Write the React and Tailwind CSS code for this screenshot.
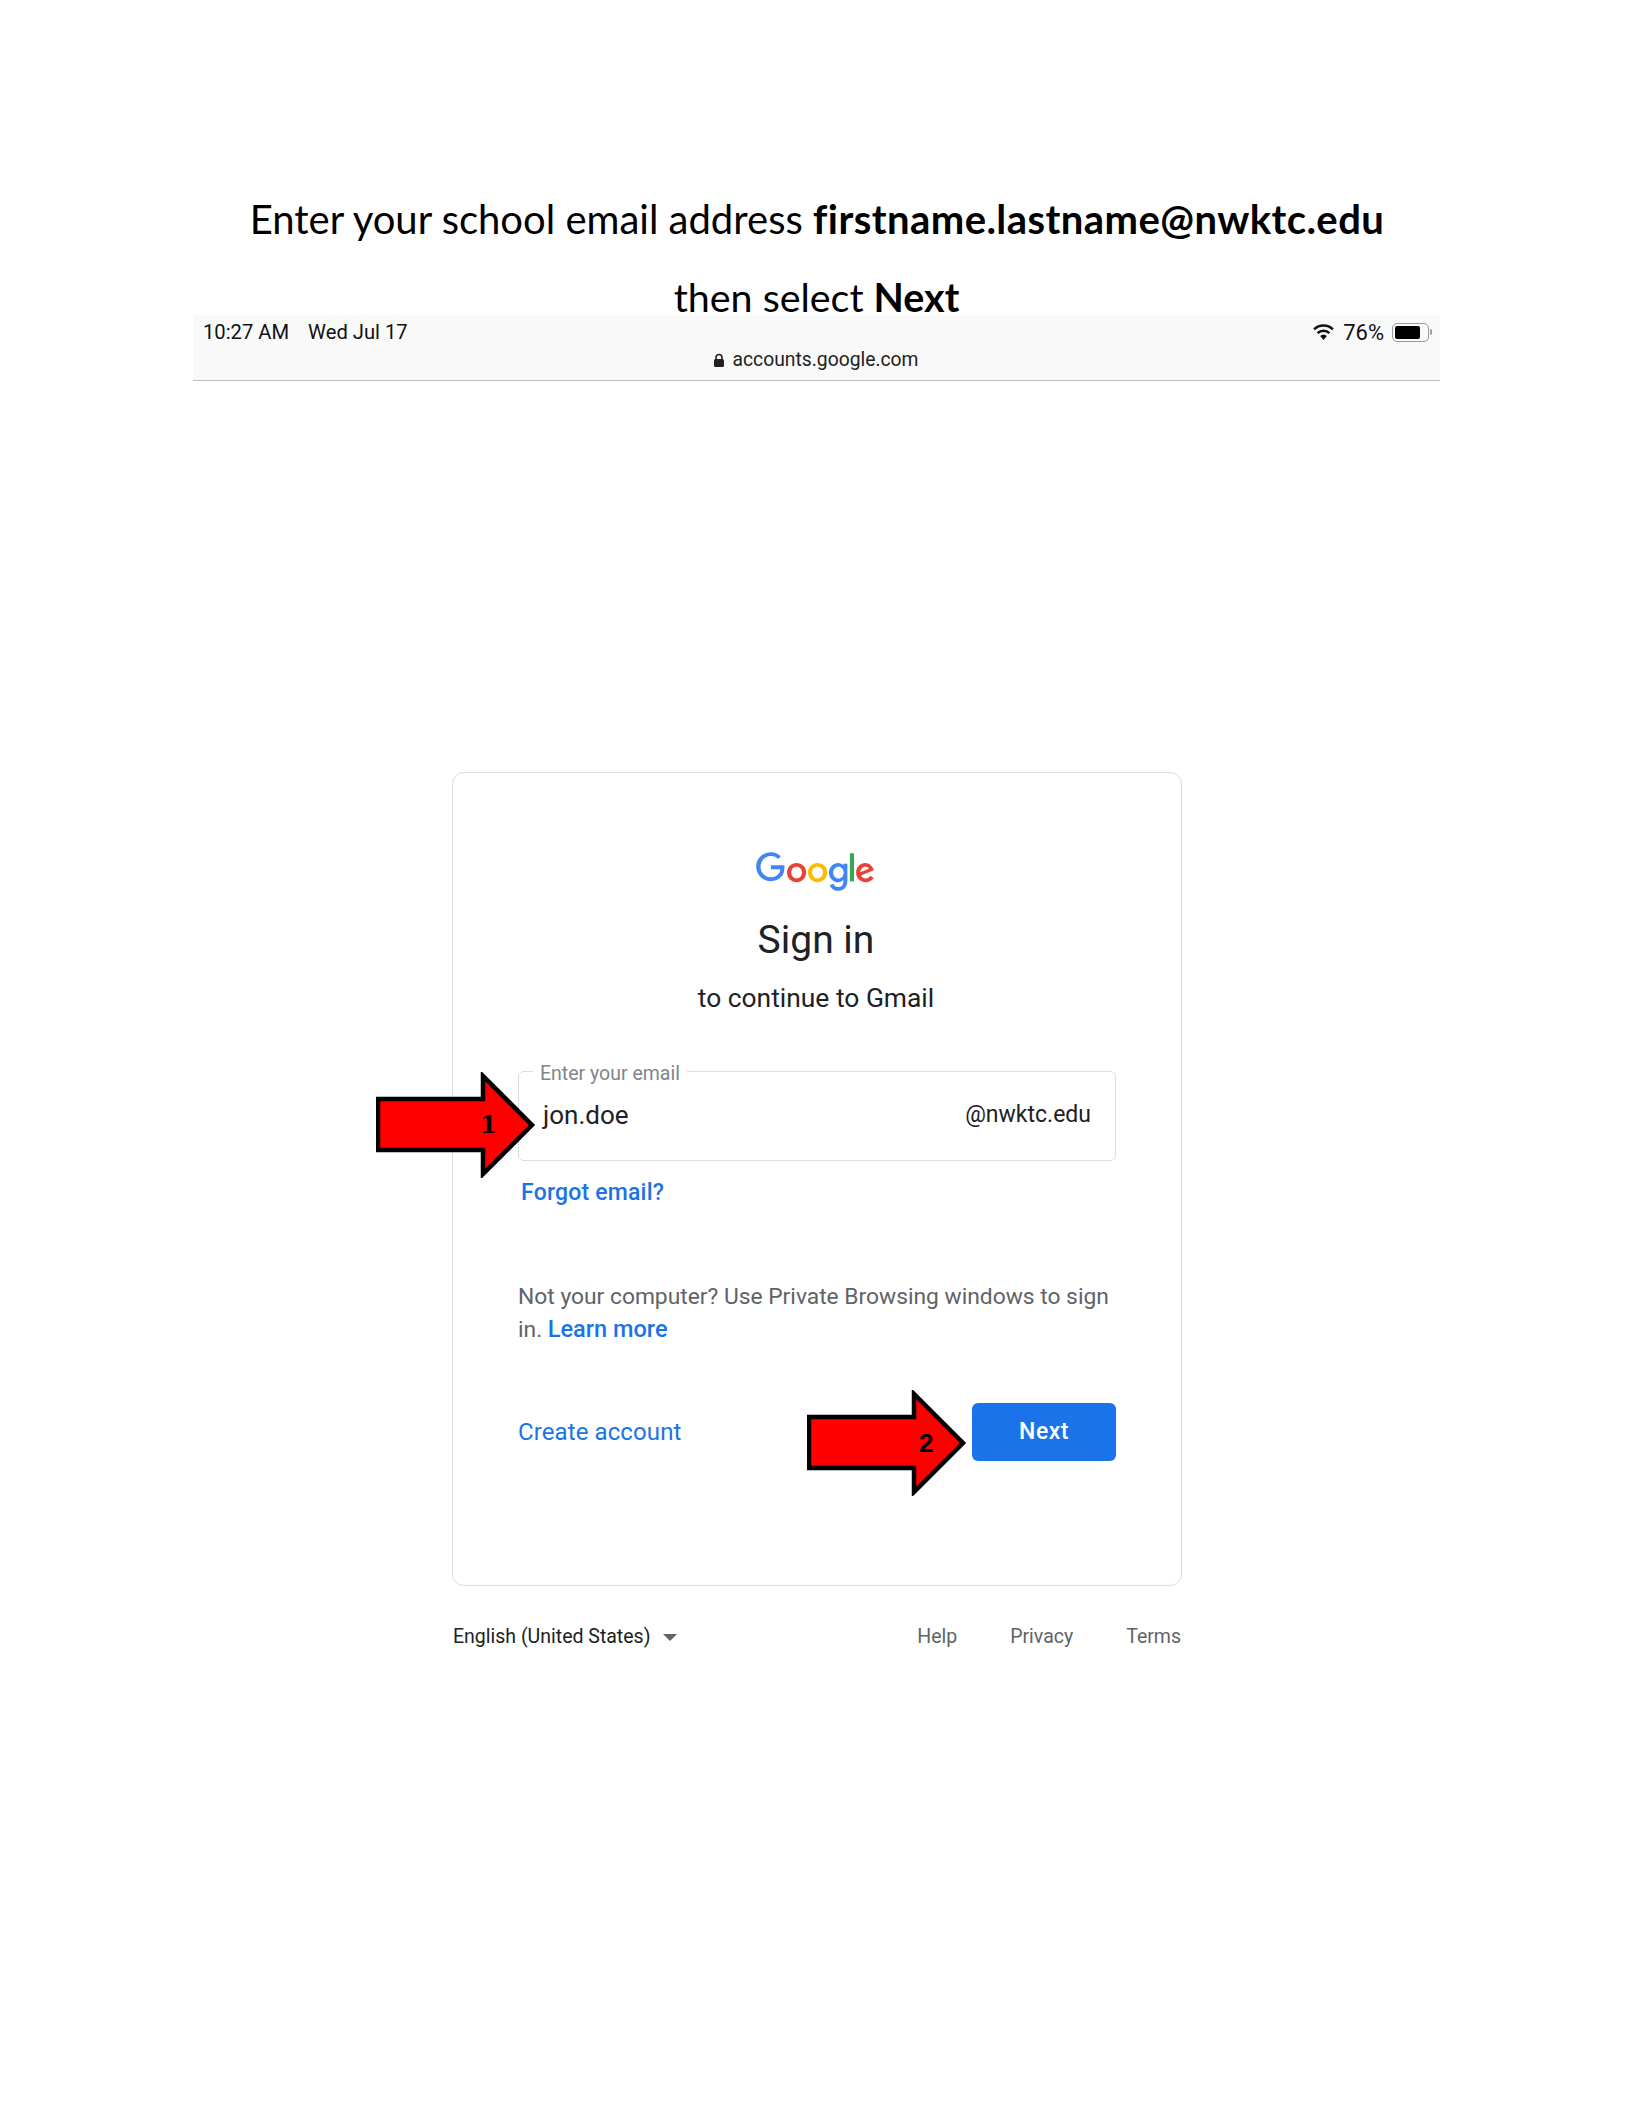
const roboto = { fontFamily: "Roboto, sans-serif" };

function GoogleLogo() {
  return (
    <svg viewBox="0 0 75 24" className="w-[121px] h-[39px] block">
      <path fill="#ea4335" d="M67.954 16.303c-1.33 0-2.278-.608-2.886-1.804l7.967-3.3-.27-.68c-.495-1.33-2.008-3.79-5.102-3.79-3.068 0-5.622 2.41-5.622 5.96 0 3.34 2.53 5.96 5.92 5.96 2.73 0 4.31-1.67 4.97-2.64l-2.03-1.35c-.673.98-1.6 1.64-2.93 1.64zm-.203-7.27c1.04 0 1.92.52 2.21 1.264l-5.32 2.21c-.06-2.3 1.79-3.474 3.12-3.474z" />
      <path fill="#34a853" d="M58.193.67h2.564v17.44h-2.564z" />
      <path fill="#4285f4" d="M54.152 8.066h-.088c-.588-.697-1.716-1.33-3.136-1.33-2.98 0-5.71 2.614-5.71 5.98 0 3.338 2.73 5.933 5.71 5.933 1.42 0 2.548-.64 3.136-1.36h.088v.86c0 2.28-1.217 3.5-3.183 3.5-1.61 0-2.6-1.15-3-2.12l-2.28.94c.65 1.58 2.39 3.52 5.28 3.52 3.06 0 5.66-1.807 5.66-6.206V7.21h-2.48v.858zm-3.006 8.237c-1.804 0-3.318-1.513-3.318-3.588 0-2.1 1.514-3.635 3.318-3.635 1.784 0 3.183 1.534 3.183 3.635 0 2.075-1.4 3.588-3.19 3.588z" />
      <path fill="#fbbc05" d="M38.17 6.735c-3.28 0-5.953 2.506-5.953 5.96 0 3.432 2.673 5.96 5.954 5.96 3.29 0 5.96-2.528 5.96-5.96 0-3.46-2.67-5.96-5.95-5.96zm0 9.568c-1.798 0-3.348-1.48-3.348-3.61 0-2.14 1.55-3.61 3.35-3.61s3.348 1.47 3.348 3.6c0 2.13-1.55 3.61-3.35 3.61z" />
      <path fill="#ea4335" d="M25.17 6.71c-3.28 0-5.954 2.505-5.954 5.958 0 3.433 2.673 5.96 5.954 5.96 3.282 0 5.955-2.527 5.955-5.96 0-3.453-2.673-5.96-5.955-5.96zm0 9.567c-1.8 0-3.35-1.487-3.35-3.61 0-2.14 1.55-3.608 3.35-3.608s3.35 1.46 3.35 3.6c0 2.12-1.55 3.61-3.35 3.61z" />
      <path fill="#4285f4" d="M9.24 8.19v2.46h5.88c-.18 1.38-.64 2.39-1.34 3.1-.86.86-2.2 1.8-4.54 1.8-3.62 0-6.45-2.92-6.45-6.54s2.83-6.54 6.45-6.54c1.95 0 3.38.77 4.43 1.76L15.4 2.5C13.94 1.08 11.98 0 9.24 0 4.28 0 .11 4.04.11 9s4.17 9 9.13 9c2.68 0 4.7-.88 6.28-2.52 1.62-1.62 2.13-3.91 2.13-5.75 0-.57-.04-1.1-.13-1.54H9.24z" />
    </svg>
  );
}

function Arrow({ className }) {
  return (
    <svg viewBox="0 0 160 106" className={className}>
      <path d="M2 27 H107 V4 L156 53 L107 102 V78 H2 Z" fill="#ff0000" stroke="#000" strokeWidth="4.5" strokeLinejoin="miter" />
    </svg>
  );
}

function Wifi() {
  return (
    <svg viewBox="0 0 24 17" className="w-[23px] h-[16px]">
      <path fill="#111" d="M12 17l-3.6-4.2a5.4 5.4 0 0 1 7.2 0z" />
      <path fill="none" stroke="#111" strokeWidth="2.6" d="M5.7 9.7a9 9 0 0 1 12.6 0" />
      <path fill="none" stroke="#111" strokeWidth="2.6" d="M2 5.6a14.4 14.4 0 0 1 20 0" />
    </svg>
  );
}

function Battery() {
  return (
    <div className="flex items-center">
      <div className="w-[37px] h-[19px] rounded-[5px] border border-[#9a9a9a] p-[2px]">
        <div className="w-[25px] h-full rounded-[2px] bg-black" />
      </div>
      <div className="w-[2px] h-[6px] ml-[1px] rounded-r-sm bg-[#9a9a9a]" />
    </div>
  );
}

export default function App() {
  return (
    <div className="relative w-[1633px] h-[2113px] bg-white overflow-hidden" style={roboto}>
      <div className="h-[315px] pt-[180px] overflow-hidden text-center text-black text-[40px] leading-[78px]" style={{ fontFamily: "Lato, sans-serif" }}>
        <p className="pl-[1px]">Enter your school email address <b className="font-bold tracking-[0.43px]">firstname.lastname@nwktc.edu</b></p>
        <p className="text-[39.4px]">then select <b className="font-bold">Next</b></p>
      </div>

      <div className="mx-[193px] h-[66px] bg-[#f9f9f9] border-b border-[#bdbdbd] relative text-[#111] text-[20.2px]">
        <div className="flex items-center justify-between h-[34px] pl-[10px] pr-[8px]">
          <div className="flex gap-[19px]">
            <span>10:27 AM</span>
            <span>Wed Jul 17</span>
          </div>
          <div className="flex items-center gap-[8px]">
            <Wifi />
            <span className="text-[22px]">76%</span>
            <Battery />
          </div>
        </div>
        <div className="flex items-center justify-center gap-[8px] text-[#222] text-[19.3px] leading-[24px] mt-[-1px] pr-[2px]">
          <svg viewBox="0 0 12 14" className="w-[12px] h-[14px]">
            <path fill="none" stroke="#222" strokeWidth="1.6" d="M3 7V4.5a3 3 0 0 1 6 0V7" />
            <rect x="1" y="6" width="10" height="8" rx="1.5" fill="#222" />
          </svg>
          <span>accounts.google.com</span>
        </div>
      </div>

      <div className="w-[730px] ml-[452px] mt-[391px]">
        <div className="h-[814px] rounded-[12px] border border-[#dadce0] px-[65px] pt-[79px]">
          <div className="flex flex-col items-center pr-[2px]">
            <GoogleLogo />
            <h1 className="text-[#202124] text-[39px] leading-[48px] mt-[25px] font-normal">Sign in</h1>
            <p className="text-[#202124] text-[26.4px] leading-[32px] mt-[18px]">to continue to Gmail</p>
          </div>

          <div className="relative mt-[57px] h-[90px] rounded-[6px] border border-[#dadce0] flex items-center justify-between pl-[24px] pr-[24px] pb-[2px]">
            <span className="absolute left-[14px] top-[-10px] px-[7px] bg-white text-[#80868b] text-[19.5px] leading-[24px]">Enter your email</span>
            <span className="text-[#202124] text-[26px]">jon.doe</span>
            <span className="text-[#202124] text-[23px]">@nwktc.edu</span>
          </div>

          <p className="text-[#1a73e8] text-[23px] leading-[30px] font-medium tracking-[0.2px] mt-[17px] ml-[3px]">Forgot email?</p>

          <p className="text-[#5f6368] text-[22.8px] leading-[32px] mt-[73px]">
            Not your computer? Use Private Browsing windows to sign in. <span className="text-[#1a73e8] text-[23.5px] font-medium">Learn more</span>
          </p>

          <div className="flex items-center justify-between mt-[57px]">
            <span className="text-[#1a73e8] text-[24px] tracking-[0.1px]">Create account</span>
            <div className="w-[144px] h-[58px] rounded-[6px] bg-[#1a73e8] text-white text-[23px] font-medium tracking-[0.5px] flex items-center justify-center">Next</div>
          </div>
        </div>

        <div className="flex items-center justify-between mt-[36px] text-[19.5px] leading-[30px] pl-[1px] pr-[1px]">
          <div className="flex items-center gap-[13px] text-[#202124]">
            <span>English (United States)</span>
            <span className="w-0 h-0 border-x-[7px] border-x-transparent border-t-[7px] border-t-[#5f6368]" />
          </div>
          <div className="flex gap-[53px] text-[#5f6368]">
            <span>Help</span>
            <span>Privacy</span>
            <span>Terms</span>
          </div>
        </div>
      </div>

      <Arrow className="absolute left-[376px] top-[1072px] w-[160px] h-[106px]" />
      <span className="absolute left-[480px] top-[1110px] text-[24px] leading-[30px] font-bold text-black" style={{ fontFamily: "'DejaVu Serif', serif" }}>1</span>
      <Arrow className="absolute left-[807px] top-[1390px] w-[160px] h-[106px]" />
      <span className="absolute left-[919px] top-[1428px] text-[26px] leading-[30px] font-bold text-black" style={{ fontFamily: "'Liberation Sans', sans-serif" }}>2</span>
    </div>
  );
}
